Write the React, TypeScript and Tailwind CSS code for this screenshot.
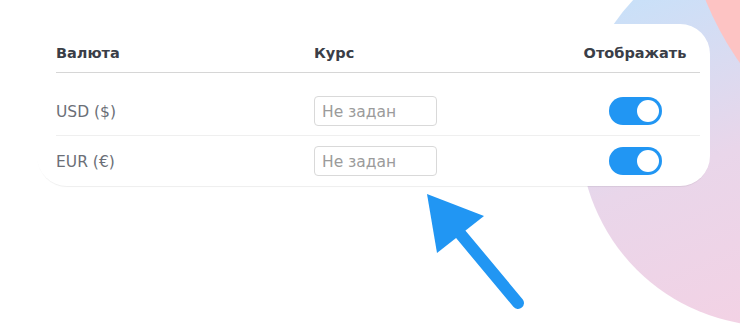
import React from "react";

const rows = [
  { code: "USD ($)" },
  { code: "EUR (€)" },
];

const Toggle = () => (
  <span className="inline-flex h-[28px] w-[53px] items-center justify-end rounded-full bg-[#2196f3] pr-[3px]">
    <span className="h-[22px] w-[22px] rounded-full bg-white" />
  </span>
);

const Backdrop = () => (
  <svg className="absolute inset-0" width="740" height="335" viewBox="0 0 740 335">
    <defs>
      <linearGradient id="blob" x1="0.3" y1="0" x2="0.7" y2="1">
        <stop offset="0" stopColor="#c3e2fb" />
        <stop offset="0.5" stopColor="#e9d6ea" />
        <stop offset="1" stopColor="#f5d1e3" />
      </linearGradient>
    </defs>
    <circle cx="773" cy="133" r="193" fill="url(#blob)" />
    <circle cx="1000" cy="-120" r="318" fill="#fdc3c3" />
    {/* arrow */}
    <line x1="518" y1="303" x2="458" y2="231" stroke="#2196f3" strokeWidth="12" strokeLinecap="round" />
    <polygon points="427,194 484,216 437,253" fill="#2196f3" />
  </svg>
);

export default function App() {
  return (
    <div className="relative h-[335px] w-[740px] overflow-hidden bg-white font-['DejaVu_Sans',sans-serif]">
      <Backdrop />
      <div className="relative pt-[24px]">
        <div className="ml-[37px] w-[673px] rounded-[30px] bg-white pb-[1px] pl-[19px] pr-[10px] shadow-[0_2px_1px_-1px_rgba(0,0,0,0.07)]">
          <div className="grid grid-cols-[258px_1fr_130px] border-b border-[#d6d6d6] pb-[9px] pt-[19px] text-[14.5px] font-bold leading-[20px] text-[#3a3e47]">
            <div>Валюта</div>
            <div>Курс</div>
            <div className="px-[12px] text-center">Отображать</div>
          </div>
          <div className="pt-[13px]">
            {rows.map((r, i) => (
              <div
                key={r.code}
                className={
                  "grid grid-cols-[258px_1fr_130px] items-center pb-[9px] pt-[10px] " +
                  (i === 0 ? "border-b border-[#efefef]" : "")
                }
              >
                <div className="pt-[3px] text-[15.5px] text-[#6b6f77]">{r.code}</div>
                <div>
                  <input
                    placeholder="Не задан"
                    className="h-[30px] w-[123px] rounded-[4px] border border-[#d9d9d9] px-[7px] pt-[2px] text-[15.5px] text-[#555] placeholder:text-[#9b9b9b] outline-none"
                  />
                </div>
                <div className="flex justify-center px-[12px]">
                  <Toggle />
                </div>
              </div>
            ))}
          </div>
        </div>
      </div>
    </div>
  );
}
